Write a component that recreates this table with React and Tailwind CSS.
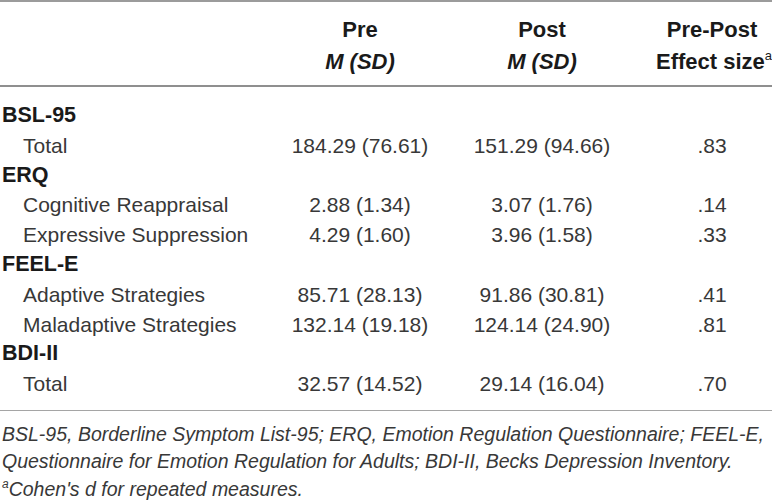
const sections = [
  {
    name: "BSL-95",
    rows: [{ label: "Total", pre: "184.29 (76.61)", post: "151.29 (94.66)", effect: ".83" }],
  },
  {
    name: "ERQ",
    rows: [
      { label: "Cognitive Reappraisal", pre: "2.88 (1.34)", post: "3.07 (1.76)", effect: ".14" },
      { label: "Expressive Suppression", pre: "4.29 (1.60)", post: "3.96 (1.58)", effect: ".33" },
    ],
  },
  {
    name: "FEEL-E",
    rows: [
      { label: "Adaptive Strategies", pre: "85.71 (28.13)", post: "91.86 (30.81)", effect: ".41" },
      { label: "Maladaptive Strategies", pre: "132.14 (19.18)", post: "124.14 (24.90)", effect: ".81" },
    ],
  },
  {
    name: "BDI-II",
    rows: [{ label: "Total", pre: "32.57 (14.52)", post: "29.14 (16.04)", effect: ".70" }],
  },
];

const cols = "grid grid-cols-[288px_144px_220px_120px]";

export default function App() {
  return (
    <div
      className="w-[772px] h-[500px] overflow-hidden bg-white text-[#383838]"
      style={{ fontFamily: '"Liberation Sans", Arial, sans-serif' }}
    >
      <div className="border-t-2 border-[#9b9b9b]" />
      <div className={`${cols} pt-[12px] pb-[7px] text-[22px] font-bold leading-[32px] text-[#1a1a1a]`}>
        <div />
        <div className="text-center">
          <div>Pre</div>
          <div className="italic">M (SD)</div>
        </div>
        <div className="text-center">
          <div>Post</div>
          <div className="italic">M (SD)</div>
        </div>
        <div className="text-center whitespace-nowrap">
          <div>Pre-Post</div>
          <div className="pl-[4px]">
            Effect size<sup className="text-[13px] font-normal -top-[9px]">a</sup>
          </div>
        </div>
      </div>
      <div className="border-t-2 border-[#8f8f8f]" />
      <div className="pt-[14px] pb-[11px] text-[21px]">
        {sections.map((section) => (
          <div key={section.name}>
            <div className="h-[29.8px] leading-[29.8px] pl-[2px] text-[21.5px] font-bold text-[#1a1a1a]">
              {section.name}
            </div>
            {section.rows.map((row) => (
              <div className={`${cols} h-[29.8px] leading-[29.8px]`} key={section.name + row.label}>
                <div className="pl-[23px] whitespace-nowrap">{row.label}</div>
                <div className="text-center whitespace-nowrap">{row.pre}</div>
                <div className="text-center whitespace-nowrap">{row.post}</div>
                <div className="text-center">{row.effect}</div>
              </div>
            ))}
          </div>
        ))}
      </div>
      <div className="border-t border-[#a5a5a5]" />
      <div className="pt-[10px] pl-[2px] text-[19.5px] italic leading-[27.5px] whitespace-nowrap">
        <div>BSL-95, Borderline Symptom List-95; ERQ, Emotion Regulation Questionnaire; FEEL-E,</div>
        <div>Questionnaire for Emotion Regulation for Adults; BDI-II, Becks Depression Inventory.</div>
        <div>
          <sup className="text-[12px] -top-[8px]">a</sup>Cohen's d for repeated measures.
        </div>
      </div>
    </div>
  );
}
